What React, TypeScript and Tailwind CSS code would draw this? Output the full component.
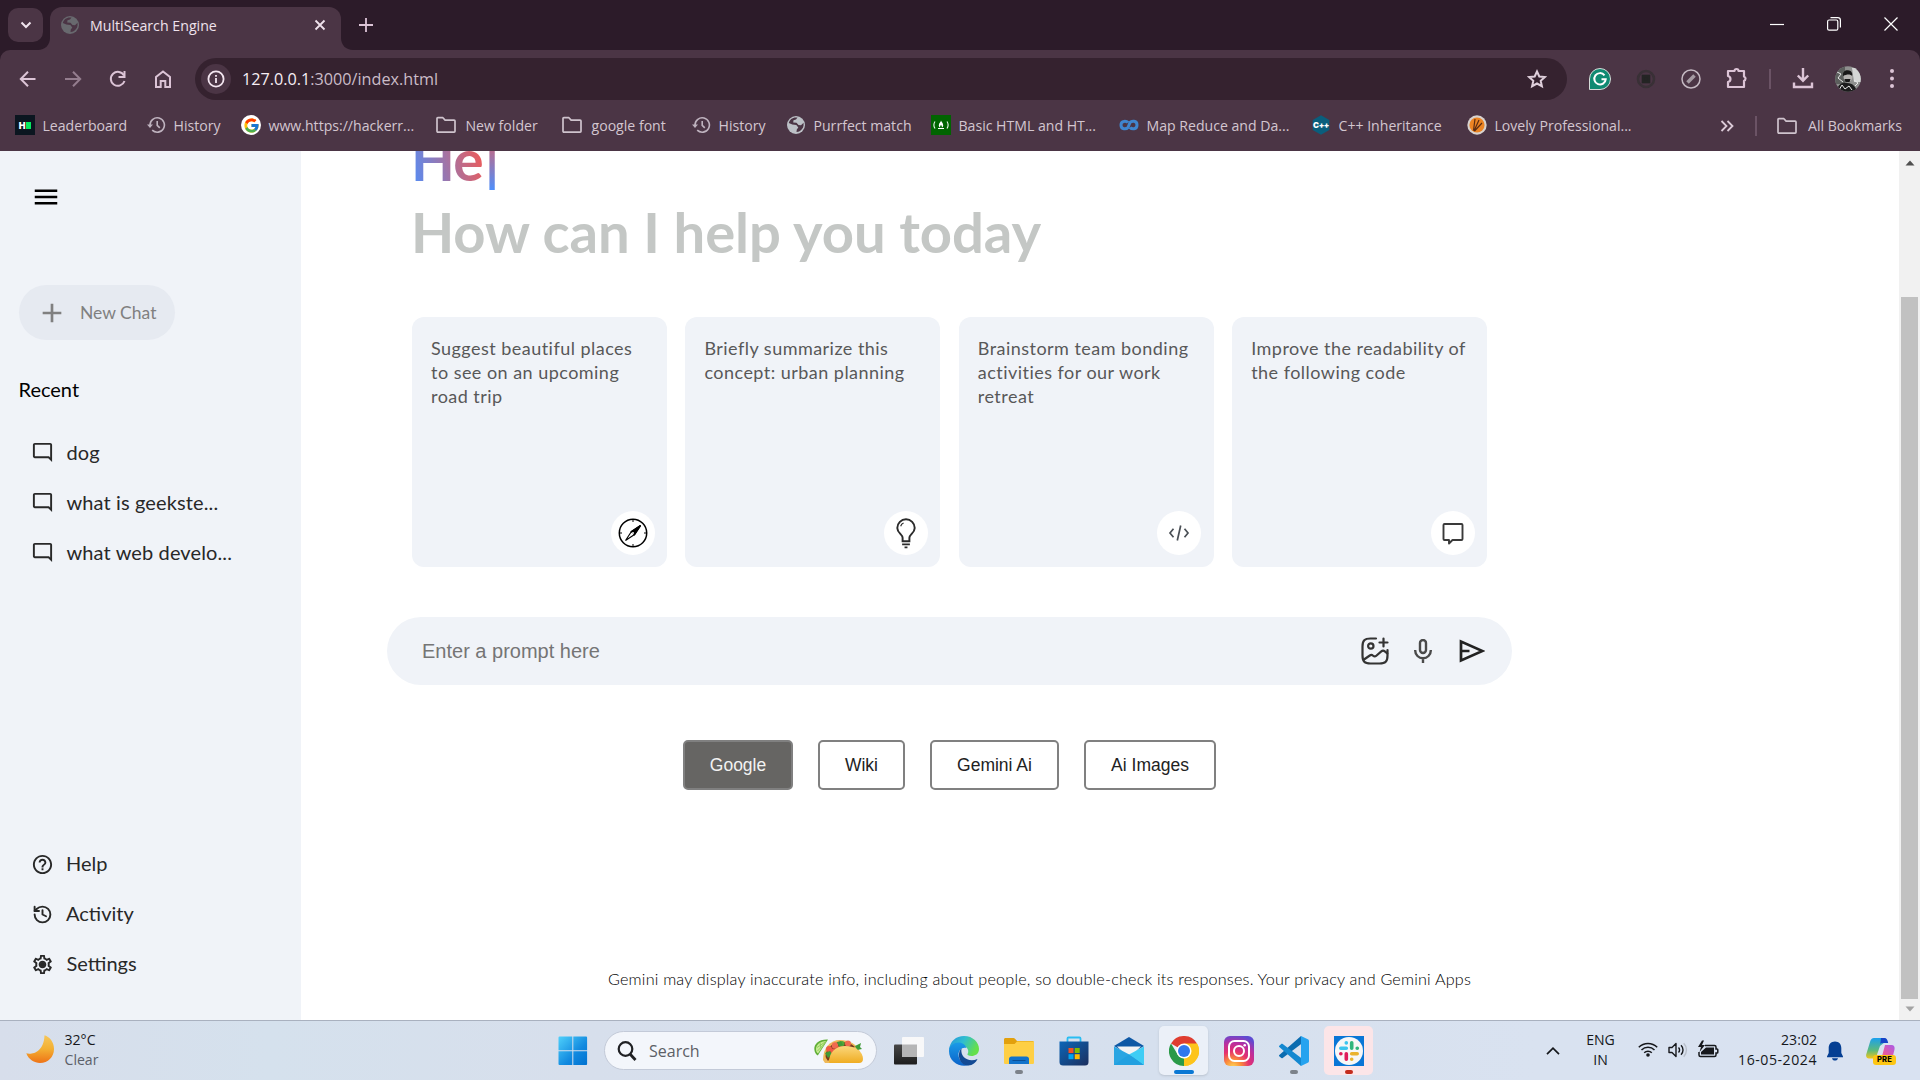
import React from 'react';
import { FcGoogle } from 'react-icons/fc';
import { History as HistoryIcon } from 'lucide-react';
import {
  MdMenu,
  MdAdd,
  MdOutlineModeComment,
  MdHelpOutline,
  MdOutlineSettings,
} from 'react-icons/md';

type IconProps = { className?: string };

/* ---------- browser icons ---------- */

const FolderIcon = ({ className = '' }: IconProps) => (
  <svg viewBox="0 0 20 20" className={`size-5 ${className}`} fill="none" stroke="#cfc3cd" strokeWidth="1.7" strokeLinejoin="round">
    <path d="M1 16.2V3.6c0-.5.4-.9.9-.9h5l2.2 2.4h9c.5 0 .9.4.9.9v10.2c0 .5-.4.9-.9.9H1.900c-.5 0-.9-.4-.9-1z" />
  </svg>
);

const GlobeIcon = ({ color }: { color: string }) => (
  <svg viewBox="0 0 20 20" className="size-5">
    <circle cx="10" cy="10" r="9" fill={color} />
    <path d="M11.500 2.600 10 4.500l-2.500.8-.3 2.200 3.300.3 2 2.200 2.500.3 2.500-2.500c.6 3.500-.6 6.200-3.500 8.200-1 .7-2.300 1-3.500 1l.3-2.500 1.500-2-2-2.500-4-.5L2.800 8C3.500 4.500 7 1.800 11.500 2.600z" fill="#4b3545" />
  </svg>
);

const ClockBack = () => (
  <svg viewBox="0 0 20 20" className="size-5" fill="none" stroke="#bfb3bf" strokeWidth="1.6">
    <path d="M4 10a7.200 7.200 0 1 1 2.200 5.200" />
    <path d="M11.200 6v4.300l2.600 2.600" />
    <path d="M1 9.500h6L4 13z" fill="#bfb3bf" stroke="none" />
  </svg>
);

const HackerRank = () => (
  <span className="flex size-5 items-center justify-center gap-px bg-[#0b1620] font-['Inter'] text-[9px] font-black leading-none text-white">
    H<span className="h-[7px] w-[5px] bg-[#05e95e]" />
  </span>
);

const CodeCamp = () => (
  <svg viewBox="0 0 20 20" className="size-5">
    <rect width="20" height="20" fill="#006400" />
    <path d="M4 6.500c-1.300 2-1.300 5 0 7M16 6.500c1.300 2 1.300 5 0 7" stroke="#e8f3e8" strokeWidth="1.100" fill="none" />
    <path d="M10 5.500c.3 1.500 2.200 2.500 2.200 4.800 0 1.100-.6 1.900-1.400 2.200.3-1.100-.1-1.700-.8-2.400-.7.700-1.100 1.300-.8 2.400-.8-.3-1.400-1.100-1.400-2.200C7.800 8 9.800 7.500 10 5.500zM7 13h6v1H7z" fill="#fff" />
  </svg>
);

const Infinity = () => (
  <svg viewBox="0 0 20 20" className="size-5" fill="none" stroke="#3f86cf" strokeWidth="3">
    <path d="M9 7.500C7.800 6.200 2 5 2 10s5.500 4.200 7 2.500L11 7.500C12.300 6 18 5 18 10s-5.500 4.200-7 2.500" />
  </svg>
);

const CppIcon = () => (
  <span className="relative flex size-5 items-center justify-center">
    <svg viewBox="0 0 20 20" className="absolute inset-0 size-5">
      <path d="M10 .3 18.300 5v10L10 19.700 1.700 15V5z" fill="#0a5e7c" />
    </svg>
    <span className="relative font-['Inter'] text-[8px] font-black leading-none tracking-tighter text-white">C++</span>
  </span>
);

const LpuIcon = () => (
  <svg viewBox="0 0 20 20" className="size-5">
    <circle cx="10" cy="10" r="9.700" fill="#d8d2ce" />
    <circle cx="10" cy="10" r="7.600" fill="#ec8423" />
    <path d="M6.500 15.500 8 4M7 16l5-11M7.500 16l7.500-8" stroke="#5b2c12" strokeWidth="1.200" />
  </svg>
);

const bookmarks: { label: string; icon: React.ReactNode; width: string }[] = [
  { label: 'Leaderboard', icon: <HackerRank />, width: 'w-[131px]' },
  { label: 'History', icon: <ClockBack />, width: 'w-[95px]' },
  { label: 'www.https://hackerr...', icon: <span className="flex size-5 items-center justify-center rounded-full bg-white"><FcGoogle className="size-[17px]" /></span>, width: 'w-[197px]' },
  { label: 'New folder', icon: <FolderIcon className="ml-[-2px] mr-[2px]" />, width: 'w-[126px]' },
  { label: 'google font', icon: <FolderIcon className="ml-[-2px] mr-[2px]" />, width: 'w-[127px]' },
  { label: 'History', icon: <ClockBack />, width: 'w-[95px]' },
  { label: 'Purrfect match', icon: <GlobeIcon color="#bcc0c6" />, width: 'w-[145px]' },
  { label: 'Basic HTML and HT...', icon: <CodeCamp />, width: 'w-[188px]' },
  { label: 'Map Reduce and Da...', icon: <Infinity />, width: 'w-[192px]' },
  { label: 'C++ Inheritance', icon: <CppIcon />, width: 'w-[156px]' },
  { label: 'Lovely Professional...', icon: <LpuIcon />, width: 'w-[253px]' },
];

function TabStrip() {
  return (
    <div className="flex h-[50px] items-start bg-[#2c1b29]">
      <button className="ml-2 mt-2 flex h-[34px] w-[35px] items-center justify-center rounded-[10px] bg-[#4b3545]">
        <svg viewBox="0 0 12 12" className="size-3" fill="none" stroke="#f0e4ee" strokeWidth="2">
          <path d="M1.500 3.500 6 8l4.500-4.500" />
        </svg>
      </button>
      <svg viewBox="0 0 12 12" className="ml-[-5px] mt-[38px] size-3" fill="#4b3545">
        <path d="M12 0v12H0C7 12 12 7 12 0z" />
      </svg>
      <div className="mt-[7px] flex h-[43px] w-[291px] items-center rounded-t-[12px] bg-[#4b3545] pb-[7px] pl-[10px]">
        <GlobeIcon color="#68696e" />
        <span className="ml-[10px] mt-px w-[224px] text-[14.200px] text-[#efe2ec]">MultiSearch Engine</span>
        <svg viewBox="0 0 12 12" className="size-3" fill="none" stroke="#efe2ec" strokeWidth="1.800">
          <path d="m1.500 1.500 9 9m0-9-9 9" />
        </svg>
      </div>
      <svg viewBox="0 0 12 12" className="mt-[38px] size-3" fill="#4b3545">
        <path d="M0 0v12h12C5 12 0 7 0 0z" />
      </svg>
      <svg viewBox="0 0 14 14" className="ml-1.5 mt-[18px] size-3.5" fill="none" stroke="#dcc4d6" strokeWidth="1.800">
        <path d="M7 0v14M0 7h14" />
      </svg>
      <div className="ml-auto mr-[22px] mt-[17px] flex items-center gap-[43px] text-white">
        <svg viewBox="0 0 14 14" className="size-3.5" stroke="currentColor" strokeWidth="1.200"><path d="M0 7.500h14" /></svg>
        <svg viewBox="0 0 14 14" className="size-3.5" fill="none" stroke="currentColor" strokeWidth="1.200">
          <rect x=".6" y="3" width="10.200" height="10.200" rx="1.500" />
          <path d="M3.500.7h7.300c1.500 0 2.600 1.100 2.600 2.600v7.300" />
        </svg>
        <svg viewBox="0 0 14 14" className="size-3.5" stroke="currentColor" strokeWidth="1.200"><path d="m.5.5 13 13m0-13-13 13" /></svg>
      </div>
    </div>
  );
}

function Toolbar() {
  return (
    <div className="bg-[#2c1b29]">
      <div className="flex h-[58px] items-center rounded-t-[10px] bg-[#4b3545] text-[#dcc4d6]">
        <div className="ml-[19px] flex w-[176px] items-center gap-[27px]">
          <svg viewBox="0 0 18 18" className="size-[18px]" fill="none" stroke="currentColor" strokeWidth="2"><path d="M16.500 9H2m7-7.200L1.800 9 9 16.200" /></svg>
          <svg viewBox="0 0 18 18" className="size-[18px] opacity-50" fill="none" stroke="currentColor" strokeWidth="2"><path d="M1 9h15M9 1.800 16.200 9 9 16.200" /></svg>
          <svg viewBox="0 0 18 18" className="size-[18px]" fill="none" stroke="currentColor" strokeWidth="2">
            <path d="M15 5.500A7 7 0 1 0 15.500 11" />
            <path d="M15.500 1v6H9.500" />
          </svg>
          <svg viewBox="0 0 18 18" className="size-[18px]" fill="none" stroke="currentColor" strokeWidth="2"><path d="M2 17V7l7-5.500L16 7v10h-4.700v-6H6.700v6z" /></svg>
        </div>
        <div className="flex h-[42px] w-[1372px] items-center rounded-full bg-[#35222f] pl-[6px] pr-5">
          <span className="flex size-[30px] items-center justify-center rounded-full bg-[#4b3545]">
            <svg viewBox="0 0 18 18" className="size-[18px]" fill="none" stroke="#f3e6f0" strokeWidth="1.800">
              <circle cx="9" cy="9" r="7.600" />
              <path d="M9 8v5M9 5v1.800" />
            </svg>
          </span>
          <span className="ml-[11px] mt-px flex-1 text-[16.200px] text-[#cbbcc8]"><span className="text-[#f7eef5]">127.0.0.1</span>:3000/index.html</span>
          <svg viewBox="0 0 20 20" className="size-5" fill="none" stroke="#dfcfdb" strokeWidth="2">
            <path d="m10 2.500 2.300 5 5.500.6-4.100 3.700 1.200 5.400L10 14.500l-4.900 2.700 1.200-5.400-4.100-3.700 5.500-.6z" />
          </svg>
        </div>
        <svg viewBox="0 0 22 22" className="ml-[22px] size-[22px]">
          <path d="M11 .5A10.500 10.500 0 1 1 11 21.500H.5V11A10.500 10.500 0 0 1 11 .5z" fill="#0f8a72" stroke="#d5dcd9" />
          <path d="M15.500 7.300a5.700 5.700 0 1 0 1.200 4h-4.200" fill="none" stroke="#fff" strokeWidth="2" />
        </svg>
        <svg viewBox="0 0 20 20" className="ml-[25px] size-5" fill="none" stroke="#393036" strokeWidth="2.600">
          <circle cx="10" cy="10" r="8" /><rect x="7" y="7" width="6" height="6" fill="#242424" stroke="#242424" />
        </svg>
        <svg viewBox="0 0 20 20" className="ml-[25px] size-5" fill="none" stroke="#c4b9c2" strokeWidth="1.500">
          <circle cx="10" cy="10" r="9" /><path d="m6.500 13.500 7-7" stroke="#a59ba3" strokeWidth="3.500" />
        </svg>
        <svg viewBox="0 0 22 22" className="mb-[2px] ml-[25px] size-[22px]" fill="none" stroke="currentColor" strokeWidth="2.200" strokeLinejoin="round">
          <path d="M2 4h6.500a2 2 0 0 1 4 0H18v5.500a2.200 2.200 0 0 1 0 4.200V20H2v-5c3.300-.7 3.300-5.200 0-6z" />
        </svg>
        <span className="ml-[21px] h-[20px] w-[1.500px] bg-[#6b5365]" />
        <svg viewBox="0 0 22 22" className="mb-[3px] ml-[21px] size-[22px]" fill="none" stroke="currentColor" strokeWidth="2.400">
          <path d="M11 1v12.500M5.800 8.500 11 13.700l5.200-5.200M2 15.500V20h18v-4.500" />
        </svg>
        <svg viewBox="0 0 26 26" className="ml-[21px] size-[26px]">
          <defs><clipPath id="avatar"><circle cx="13" cy="13" r="12.800" /></clipPath></defs>
          <g clipPath="url(#avatar)">
            <rect width="26" height="26" fill="#8f908f" />
            <path d="M0 0h10v18H0z" fill="#5c5f5d" />
            <path d="M17 2h9v14h-7z" fill="#d5d7d6" />
            <path d="M2 26c0-7 5-10 10-9 6 0 9 4 10 9z" fill="#1b1b1c" />
            <circle cx="13" cy="11" r="4.500" fill="#b4b2b0" />
            <path d="M8 10c-.5-4 2-6 5-5.700 3 .2 5 2.700 4 5.700-1.500-2-5-2-9 0zM9.500 13h6l-1 3h-4z" fill="#181818" />
            <path d="M2 6l4 2-3 4 5 4M4 24l3-5 3 4 4-3 3 4M19 14l4 3-3 3" stroke="#e8e8e8" fill="none" />
          </g>
        </svg>
        <svg viewBox="0 0 6 20" className="ml-7 h-5 w-1.5" fill="currentColor"><circle cx="3" cy="2" r="2" /><circle cx="3" cy="9.500" r="2" /><circle cx="3" cy="17" r="2" /></svg>
      </div>
    </div>
  );
}

function BookmarkBar() {
  return (
    <div className="flex h-[43px] items-center bg-[#4b3545] pb-[8px] pl-[15px] text-[14.100px] whitespace-nowrap text-[#d3c6d0]">
      {bookmarks.map((b, i) => (
        <div key={i} className={`flex shrink-0 items-center gap-[7.500px] ${b.width}`}>
          <span className="shrink-0">{b.icon}</span>
          {b.label}
        </div>
      ))}
      <svg viewBox="0 0 14 12" className="h-3 w-3.5" fill="none" stroke="#dccbd8" strokeWidth="1.800"><path d="m1.500 1 5 5-5 5M7.500 1l5 5-5 5" /></svg>
      <span className="ml-[21px] h-5 w-[2px] bg-[#6b5365]" />
      <FolderIcon className="ml-5" />
      <span className="ml-[11px]">All Bookmarks</span>
    </div>
  );
}

/* ---------- web page ---------- */

const SettingsIcon = ({ className = '' }: IconProps) => (
  <span className={`relative flex items-center justify-center ${className}`}>
    <MdOutlineSettings className="size-full" />
    <span className="absolute size-[5px] rounded-full bg-current" />
  </span>
);

function Sidebar() {
  return (
    <aside className="flex w-[301px] flex-col bg-[#f0f3f8] text-[20px] text-[#282828]">
      <MdMenu className="ml-[31px] mt-[31px] size-[30px] text-black" />
      <div className="ml-[19px] mt-[73px] flex h-[55px] w-[156px] items-center rounded-full bg-[#e6eaf1] pl-[17px] text-[17.500px] text-[#808080]">
        <MdAdd className="size-8" />
        <span className="ml-[12px] mt-[2px]">New Chat</span>
      </div>
      <p className="ml-[18.500px] mt-[34px] leading-[30px] text-black">Recent</p>
      <div className="mt-[24px] flex flex-col">
        {['dog', 'what is geekste...', 'what web develo...'].map((t) => (
          <div key={t} className="flex h-[50px] items-center pl-[31px]">
            <MdOutlineModeComment className="mt-[-1px] size-[23px]" />
            <span className="ml-[12.500px] mt-[-2px] tracking-[0.006em]">{t}</span>
          </div>
        ))}
      </div>
      <div className="mt-auto mb-[31px] flex flex-col">
        <div className="flex h-[50px] items-center pl-[31px]">
          <MdHelpOutline className="size-[23px]" />
          <span className="ml-[12px] mt-[-2px]">Help</span>
        </div>
        <div className="flex h-[50px] items-center pl-[32px]">
          <HistoryIcon className="size-[21px]" strokeWidth={2.200} />
          <span className="ml-[13px] mt-[-2px]">Activity</span>
        </div>
        <div className="flex h-[50px] items-center pl-[31px]">
          <SettingsIcon className="size-[23px]" />
          <span className="ml-[12.500px] mt-[-2px]">Settings</span>
        </div>
      </div>
    </aside>
  );
}

const CompassIcon = () => (
  <svg viewBox="0 0 30 30" className="size-[30px]" fill="none" stroke="#000" strokeWidth="1.500">
    <circle cx="15" cy="15" r="13.700" />
    <path d="M15 2v2M15 26v2M2 15h2M26 15h2" strokeWidth="1" />
    <path d="M22.500 7.500 13.500 13.500l-6 9L16.500 16.500z" strokeWidth="1.100" />
    <path d="M22.500 7.500 13.500 13.500l3 3z" fill="#000" />
    <circle cx="15" cy="15" r="1" fill="#fff" stroke="none" />
  </svg>
);

const BulbIcon = () => (
  <svg viewBox="0 0 22 32" className="h-[31px] w-[22px]" fill="none" stroke="#2b2b2b" strokeWidth="2">
    <path d="M7.500 24v-3.500C7.500 17 2 15.500 2 10.300a9 9 0 0 1 18 0c0 5.200-5.500 6.700-5.500 10.200V24z" />
    <path d="M5.500 8.500c.5-1.500 1.500-2.700 3-3.300" strokeWidth="1.200" />
    <path d="M7 27.300h8M9.500 30.300h3" strokeWidth="1.800" />
  </svg>
);

const CodeIcon = () => (
  <svg viewBox="0 0 22 18" className="h-[18px] w-[22px]" fill="none" stroke="#4a4f55" strokeWidth="1.700">
    <path d="M5.500 4.800 2 9l3.500 4.200M16.500 4.800 20 9l-3.500 4.200M12.700 1.500 9.300 16.500" />
  </svg>
);

const MessageIcon = () => (
  <svg viewBox="0 0 22 24" className="mt-[1px] h-6 w-[22px]" fill="none" stroke="#3a3a3a" strokeWidth="1.900" strokeLinejoin="round">
    <path d="M2.500 2h17c.6 0 1 .4 1 1v14c0 .6-.4 1-1 1h-9L7 21.500V18H2.500c-.6 0-1-.4-1-1V3c0-.6.4-1 1-1z" />
  </svg>
);

const cards: { lines: string[]; icon: React.ReactNode }[] = [
  { lines: ['Suggest beautiful places', 'to see on an upcoming', 'road trip'], icon: <CompassIcon /> },
  { lines: ['Briefly summarize this', 'concept: urban planning'], icon: <BulbIcon /> },
  { lines: ['Brainstorm team bonding', 'activities for our work', 'retreat'], icon: <CodeIcon /> },
  { lines: ['Improve the readability of', 'the following code'], icon: <MessageIcon /> },
];

function PromptBar() {
  return (
    <div className="ml-[86px] mt-[50px] flex h-[67.500px] w-[1125px] items-center rounded-full bg-[#f0f3f8] pl-[35px] pr-7">
      <span className="flex-1 font-['Liberation_Sans',sans-serif] text-[20px] text-[#757575]">Enter a prompt here</span>
      <svg viewBox="0 0 28 28" className="size-7" fill="none" stroke="#333" strokeWidth="2.200" strokeLinecap="round">
        <path d="M15 1.500H9.500c-6 0-8 2-8 8v9c0 6 2 8 8 8h9c6 0 8-2 8-8V13" />
        <circle cx="9.800" cy="9" r="2.700" />
        <path d="M22.500 1.500v8M18.500 5.500h8" />
        <path d="m3 22.500 5.800-4c1-.7 2.400-.6 3.300.2.900.8 2.300.8 3.200 0l5-4.300c1-.9 2.500-.9 3.500 0l2.500 2" />
      </svg>
      <svg viewBox="0 0 18 24" className="ml-[25px] h-6 w-[18px]" fill="none" stroke="#4a4a4a" strokeWidth="2.400">
        <rect x="6" y="1" width="6" height="13" rx="3" />
        <path d="M1.200 11v.5a7.800 7.800 0 0 0 15.600 0V11M9 19v5" />
      </svg>
      <svg viewBox="0 0 26 24" className="ml-[26.500px] mr-[-.5px] h-6 w-[26px]" fill="none" stroke="#222" strokeWidth="2.700">
        <path d="M2 2.500v19L23.500 12zM2 12h8.500" />
      </svg>
    </div>
  );
}

function MainPane() {
  return (
    <main className="flex flex-1 flex-col overflow-hidden bg-white">
      <div className="mt-[-28px] ml-[110px] text-[56.200px] font-bold leading-[73px]">
        <div className="flex h-[71px] text-transparent">
          <span className="bg-[linear-gradient(74deg,#4b90ff,#ff5546)] bg-clip-text text-[57px] tracking-[-0.015em]">He</span>
          <span className="ml-0.5 bg-[linear-gradient(4deg,#4b90ff_4%,#ff5546)] bg-clip-text">|</span>
        </div>
        <div className="mt-px tracking-[-0.001em] text-[#c4c7c5]">How can I help you today</div>
      </div>
      <div className="ml-[111px] mt-[49px] flex gap-[18.400px]">
        {cards.map((c) => (
          <div key={c.lines[0]} className="flex h-[250px] w-[255px] flex-col rounded-[12px] bg-[#f0f3f8] pt-[19px] pr-[12.500px] pb-3 pl-[19px]">
            <p className="text-[18px] leading-6 tracking-[0.026em] whitespace-nowrap text-[#585858]">
              {c.lines.map((l) => (
                <span key={l} className="block">{l}</span>
              ))}
            </p>
            <span className="mt-auto flex size-11 items-center justify-center self-end rounded-full bg-white">{c.icon}</span>
          </div>
        ))}
      </div>
      <PromptBar />
      <div className="ml-[382px] mt-[55.500px] flex gap-[25px] font-['Liberation_Sans',sans-serif] text-[17.500px] text-[#222]">
        <button className="h-[50px] w-[110px] rounded-[5px] border-2 border-[#808080] bg-[#666563] text-[#f2f2f2]">Google</button>
        <button className="h-[50px] w-[87px] rounded-[5px] border-2 border-[#808080]">Wiki</button>
        <button className="h-[50px] w-[129px] rounded-[5px] border-2 border-[#808080]">Gemini Ai</button>
        <button className="h-[50px] w-[132px] rounded-[5px] border-2 border-[#808080]">Ai Images</button>
      </div>
      <p className="mt-auto mb-[29px] ml-[307px] text-[16.200px] font-light leading-6 tracking-[0.012em] whitespace-nowrap text-black">
        Gemini may display inaccurate info, including about people, so double-check its responses. Your privacy and Gemini Apps
      </p>
    </main>
  );
}

function Scrollbar() {
  return (
    <div className="flex w-[21px] flex-col items-center bg-[#f1f1f1]">
      <svg viewBox="0 0 10 6" className="mt-[9px] h-1.5 w-2.5" fill="#505050"><path d="m5 .5 4.500 5h-9z" /></svg>
      <div className="mt-[131px] h-[702px] w-[17px] bg-[#c1c1c1]" />
      <svg viewBox="0 0 10 6" className="mt-[7px] h-1.5 w-2.5" fill="#a3a3a3"><path d="m5 5.500 4.500-5h-9z" /></svg>
    </div>
  );
}

/* ---------- taskbar ---------- */

const WindowsLogo = () => (
  <svg viewBox="0 0 30 30" className="size-[30px]">
    <defs><linearGradient id="win" x1="0" y1="0" x2="1" y2="1"><stop offset="0" stopColor="#4fd0fb" /><stop offset=".6" stopColor="#1189df" /><stop offset="1" stopColor="#0071d0" /></linearGradient></defs>
    <path d="M1.500.5h12.800v13.800H.5V1.500a1 1 0 0 1 1-1zM15.300.5h12.800a1 1 0 0 1 1 1v12.800H15.300zM.5 15.300h13.800v13.800H1.500a1 1 0 0 1-1-1zM15.300 15.300h13.800v12.800a1 1 0 0 1-1 1H15.300z" fill="url(#win)" />
  </svg>
);

const Taco = () => (
  <svg viewBox="0 0 50 26" className="h-[26px] w-[50px]">
    <defs><linearGradient id="shell" x1="0" y1="0" x2="0" y2="1"><stop offset="0" stopColor="#fbd77c" /><stop offset="1" stopColor="#efac22" /></linearGradient></defs>
    <path d="M14 1.500C5 1 0 6 .3 11c.2 3 1.500 5.500 3.500 6.500z" fill="#5fae35" />
    <path d="M12.500 3C6 3 2 7 2 11c0 2 .7 3.500 2 4.500z" fill="#c6eb92" />
    <path d="m3 9.500 9-6M3.500 13l9-9.500M6 4.500l1 6" stroke="#86c653" strokeWidth=".8" />
    <path d="M9 22C9 10 16 2 26 2c9 0 17 4 20 12L20 25h-9z" fill="#efb958" />
    <path d="M12 20c-2-7 6-16 14-16 6 0 11 1 15 5L20 16l-6 7z" fill="#7a3b1c" />
    <circle cx="15" cy="11" r="3" fill="#ee5a43" /><circle cx="21" cy="7.500" r="3.200" fill="#f06a4f" /><circle cx="19" cy="13" r="2.500" fill="#ee5a43" /><circle cx="28" cy="5.500" r="2.600" fill="#53a638" /><circle cx="34" cy="5.500" r="3" fill="#f06a4f" /><circle cx="25" cy="10.500" r="2.600" fill="#e8573d" />
    <path d="m11 15 5-2 2 3-4 4zM23 4l4-1 2 4-4 2zM41 8l6-3-1 4 2 2-5 1z" fill="#3f9a37" />
    <path d="M15 24c0-9 6-16 16-16 11 0 18 6 18 13 0 2.500-1.500 4-4 4H18c-2 0-3 0-3-1z" fill="url(#shell)" />
  </svg>
);

const TaskView = () => (
  <svg viewBox="0 0 30 30" className="size-[30px]">
    <defs><linearGradient id="tv" x1="0" y1="0" x2="0" y2="1"><stop offset="0" stopColor="#474747" /><stop offset="1" stopColor="#1d1d1d" /></linearGradient></defs>
    <rect x="0" y="8.500" width="23" height="20" rx="1" fill="url(#tv)" />
    <rect x="8" y="1" width="22" height="20" rx="1" fill="#f8f8f9" />
    <path d="M8 8.500h15V21H8z" fill="#b5b5b6" />
  </svg>
);

const EdgeLogo = () => (
  <svg viewBox="0 0 30 30" className="size-[30px]">
    <defs>
      <linearGradient id="e1" x1="0" y1="0" x2="1" y2=".4"><stop offset="0" stopColor="#2393dd" /><stop offset=".5" stopColor="#30bdd0" /><stop offset="1" stopColor="#65e04b" /></linearGradient>
      <linearGradient id="e2" x1="0" y1="0" x2="0" y2="1"><stop offset="0" stopColor="#1a9be8" /><stop offset="1" stopColor="#0a62c9" /></linearGradient>
    </defs>
    <path d="M0 14C1 5 7 0 15 0c9 0 15 6.500 15 13 0 5-4 7-7.500 7-3 0-4.500-1.200-4-2 1.500-2 1-6-3-8C10 8 3 9 0 14z" fill="url(#e1)" />
    <path d="M0 15c0-6 6-9 10.500-8.500 3.500.4 6.500 3 7 5.500-4-1.500-8 2-8 6.500 0 6 5 11 10.500 10.500C11 32 0 26 0 15z" fill="url(#e2)" />
    <path d="M12.500 12.500C8 16 9 29.500 19.500 29.500c4 0 7.500-3 9-6.500-9 4-17.500-2-16-10.500z" fill="#134a94" />
  </svg>
);

const ExplorerLogo = () => (
  <svg viewBox="0 0 30 30" className="size-[30px]">
    <path d="M0 3.500C0 2.700.6 2 1.500 2h8c.7 0 1 .2 1.500.7L13 5h15.500c.8 0 1.500.7 1.500 1.500V12H0z" fill="#e2a00d" />
    <path d="M0 8h10.500L13 5.500h17v21c0 1-.6 1.500-1.500 1.500h-27C.6 28 0 27.500 0 26.500z" fill="#fecf45" />
    <path d="M5 28v-5c0-1.500 1-2.500 2.500-2.500h15c1.500 0 2.500 1 2.500 2.500v5z" fill="#1273cb" />
    <path d="M8.500 24.500h13" stroke="#0a4f96" />
  </svg>
);

const StoreLogo = () => (
  <svg viewBox="0 0 30 30" className="size-[30px]">
    <defs><linearGradient id="st" x1="0" y1="0" x2="1" y2="1"><stop offset="0" stopColor="#0b66b8" /><stop offset="1" stopColor="#1c2f5e" /></linearGradient></defs>
    <path d="M8.500 6V2.500c0-.6.400-1 1-1h11c.6 0 1 .4 1 1V6" fill="none" stroke="#29bdf2" strokeWidth="1.800" />
    <path d="M.5 5.500h29V26a3.500 3.500 0 0 1-3.500 3.500H4A3.500 3.500 0 0 1 .5 26z" fill="url(#st)" />
    <path d="M9.500 12h5v5h-5z" fill="#f25022" /><path d="M15.700 12h5v5h-5z" fill="#7fba00" /><path d="M9.500 18.200h5v5h-5z" fill="#00a4ef" /><path d="M15.700 18.200h5v5h-5z" fill="#ffb900" />
  </svg>
);

const MailLogo = () => (
  <svg viewBox="0 0 30 30" className="size-[30px]">
    <path d="M0 10 15 1l15 9-15 9z" fill="#0d58a5" />
    <path d="M3 10.500h24L17 20h-4z" fill="#f1f3f5" />
    <path d="M0 10.500 20 21l10 8H0z" fill="#2aa5e2" />
    <path d="M30 10.500V29L15 18.500z" fill="#3fcdf5" />
    <path d="M0 29h30L15 18.500z" fill="#22a0e0" />
  </svg>
);

const ChromeLogo = () => (
  <svg viewBox="0 0 30 30" className="size-[30px]">
    <path d="M15 15 2 7.500A15 15 0 0 1 28 7.500z" fill="#df3d30" />
    <path d="M15 15 28 7.500A15 15 0 0 1 15 30l-1.500-1z" fill="#fdc41c" />
    <path d="M2 7.500 9 19l6 3.500L15 30A15 15 0 0 1 2 7.500z" fill="#2a9a48" />
    <path d="M15 7.500h13A15 15 0 0 1 15 30l6.500-11.200z" fill="#fdc41c" />
    <circle cx="15" cy="15" r="7.500" fill="#fff" />
    <circle cx="15" cy="15" r="6" fill="#3078ee" />
  </svg>
);

const InstagramLogo = () => (
  <svg viewBox="0 0 30 30" className="size-[30px]" fill="none">
    <defs><radialGradient id="ig" cx=".3" cy="1.050" r="1.100"><stop offset="0" stopColor="#fed859" /><stop offset=".25" stopColor="#fb8c3a" /><stop offset=".5" stopColor="#e4306f" /><stop offset=".75" stopColor="#b92fa0" /><stop offset="1" stopColor="#5e4bd2" /></radialGradient></defs>
    <rect width="30" height="30" rx="6" fill="url(#ig)" />
    <rect x="5" y="5" width="20" height="20" rx="5.500" stroke="#fff" strokeWidth="2" />
    <circle cx="15" cy="15" r="5" stroke="#fff" strokeWidth="2" />
    <circle cx="20.700" cy="9.200" r="1.300" fill="#fff" />
  </svg>
);

const VsCodeLogo = () => (
  <svg viewBox="0 0 30 30" className="size-[30px]">
    <path d="M22 0l1.500 7L3.700 21.900c-.5.4-1.200.4-1.700-.1L.3 20.300c-.5-.4-.4-.9 0-1.300z" fill="#0b6cb0" />
    <path d="M22 30l1.500-7L3.700 8.100c-.5-.4-1.200-.4-1.700.1L.3 9.700c-.5.4-.4.9 0 1.300z" fill="#1488d0" />
    <path d="M22 0l6.800 3.200c.7.3 1.200 1 1.200 1.800v20c0 .8-.5 1.500-1.200 1.800L22 30z" fill="#26a3ef" />
  </svg>
);

const SlackLogo = () => (
  <svg viewBox="0 0 30 30" className="size-[30px]">
    <rect width="30" height="30" fill="#0a76d6" />
    <circle cx="15" cy="15" r="14" fill="#f7f7f7" />
    <g strokeWidth="3.600" strokeLinecap="round">
      <path d="M12.300 6.800v.1M6.800 12.300h5.500" stroke="#3cc5ef" />
      <path d="M17.700 6.800v5.500M23.200 12.300h.1" stroke="#30b57c" />
      <path d="M17.700 17.700h5.500M17.700 23.200v.1" stroke="#eab22e" />
      <path d="M12.300 17.700v5.500M6.800 17.700h.1" stroke="#df1c5a" />
    </g>
  </svg>
);

type TaskApp = { name: string; icon: React.ReactNode; tile?: string; bar?: string };
const apps: TaskApp[] = [
  { name: 'view', icon: <TaskView /> },
  { name: 'edge', icon: <EdgeLogo /> },
  { name: 'files', icon: <ExplorerLogo />, bar: 'w-2 bg-[#7c828a]' },
  { name: 'store', icon: <StoreLogo /> },
  { name: 'mail', icon: <MailLogo /> },
  { name: 'chrome', icon: <ChromeLogo />, tile: 'bg-[#ebf0f8] shadow-sm', bar: 'w-5 bg-[#0a78d4]' },
  { name: 'instagram', icon: <InstagramLogo /> },
  { name: 'code', icon: <VsCodeLogo />, bar: 'w-2 bg-[#7c828a]' },
  { name: 'slack', icon: <SlackLogo />, tile: 'bg-[#fce5e8]', bar: 'w-2 bg-[#c42b1c]' },
];

function Taskbar() {
  return (
    <footer className="flex h-[60px] items-center border-t border-[#a9b1bf] bg-[linear-gradient(90deg,#d7deeb,#d5e1ed_14%,#d7dfec_30%,#d6e0ee_60%,#d9e2f0_80%,#d9e2f1)] text-[14.100px] text-[#16181c]">
      <svg viewBox="0 0 28 28" className="mb-[3px] ml-[26px] size-7">
        <defs><linearGradient id="moon" x1="0" y1="0" x2="0" y2="1"><stop offset="0" stopColor="#f6c75a" /><stop offset=".5" stopColor="#f3af32" /><stop offset="1" stopColor="#ee7317" /></linearGradient></defs>
        <path d="M18.500.3C24 2 28 7.500 28 14c0 8-6 14-14 14C8.500 28 2.500 24.500.3 18.300 5 20 18 18 18.500.3z" fill="url(#moon)" />
      </svg>
      <div className="mb-[2px] ml-[10.500px] w-[493px] leading-5">
        <div>32°C</div>
        <div className="text-[#5b6069]">Clear</div>
      </div>
      <WindowsLogo />
      <div className="ml-[16.500px] flex h-[39px] w-[273px] items-center rounded-full border border-[#c3cad8] bg-[#f3f6fb] pl-[12px] pr-3">
        <svg viewBox="0 0 20 20" className="size-5" fill="none" stroke="#202124" strokeWidth="2.200"><circle cx="8.500" cy="8" r="6.800" /><path d="m13 13 5.500 6" strokeWidth="2.800" /></svg>
        <span className="ml-3 flex-1 text-[16px] text-[#5c6066]">Search</span>
        <Taco />
      </div>
      <div className="ml-[4px] flex h-full">
        {apps.map((a) => (
          <div key={a.name} className="relative flex h-full w-[55px] items-center justify-center">
            <div className={`flex size-[49px] items-center justify-center rounded-[5px] ${a.tile ?? ''}`}>{a.icon}</div>
            {a.bar && <span className={`absolute bottom-[6px] h-1 rounded-full ${a.bar}`} />}
          </div>
        ))}
      </div>
      <svg viewBox="0 0 14 8" className="ml-[170px] h-2 w-3.5" fill="none" stroke="#16181c" strokeWidth="1.700"><path d="M1 7.200 7 1.200l6 6" /></svg>
      <div className="mb-[2px] ml-[20px] w-[41px] text-center leading-5">ENG<br />IN</div>
      <svg viewBox="0 0 20 16" className="mb-[3px] ml-[17px] h-4 w-5" fill="none" stroke="#16181c" strokeWidth="1.500">
        <path d="M.8 6.200a13 13 0 0 1 18.400 0M3.500 9a9.200 9.200 0 0 1 13 0M6.200 11.700a5.400 5.400 0 0 1 7.600 0" /><circle cx="10" cy="14" r="1.800" fill="#16181c" stroke="none" />
      </svg>
      <svg viewBox="0 0 20 16" className="mb-[2px] ml-[10px] h-4 w-5" fill="none" stroke="#16181c" strokeWidth="1.400">
        <path d="M1 5.500h3L8 1.500v13l-4-4H1z" strokeLinejoin="round" /><path d="M10.500 5.500a3.500 3.500 0 0 1 0 5M13 3.300a6.500 6.500 0 0 1 0 9.400" /><path d="M15.700 1.300a9.500 9.500 0 0 1 0 13.400" stroke="#b9bfca" />
      </svg>
      <svg viewBox="0 0 22 18" className="mb-1 ml-[9px] h-[18px] w-[22px]" fill="#16181c">
        <path d="M8 5.500h9.500c1 0 1.500.5 1.500 1.500v2h1c.6 0 .8.4.8.8v2.400c0 .4-.3.800-.8.800h-1v2c0 1-.5 1.500-1.500 1.500h-14c-1 0-1.500-.5-1.500-1.500V12" fill="none" stroke="#16181c" strokeWidth="1.500" />
        <path d="M9 7.500h8V14.500H4V12z" /><path d="M5 .5 1 7h3l-1.500 5L8 5H5l2-4.500z" />
      </svg>
      <div className="mb-[2px] ml-auto mr-[10px] text-right leading-5"><div>23:02</div><div className="tracking-[0.038em]">16-05-2024</div></div>
      <svg viewBox="0 0 16 20" className="h-5 w-4" fill="#053f93"><path d="M8 .5c4 0 6.300 2.800 6.300 6.500v5l1.700 3.500v.8H0v-.8L1.700 12V7C1.700 3.300 4 .5 8 .5zM5 17.200h6c-.3 1.500-1.500 2.300-3 2.300s-2.700-.8-3-2.300z" /></svg>
      <div className="relative ml-[23px] mr-[24px] size-[30px]">
        <svg viewBox="0 0 30 30" className="size-[30px]">
          <defs>
            <linearGradient id="c1" x1="0" y1="0" x2="0" y2="1"><stop offset="0" stopColor="#1aa0ef" /><stop offset=".6" stopColor="#5cba7c" /><stop offset="1" stopColor="#f2c61b" /></linearGradient>
            <linearGradient id="c2" x1="1" y1="0" x2="0" y2="1"><stop offset="0" stopColor="#a95be8" /><stop offset=".6" stopColor="#ea5a9c" /><stop offset="1" stopColor="#f7834c" /></linearGradient>
          </defs>
          <path d="M8 2h9c2 0 3 1 3.500 3L14 10l-3.500 10c-.6 2-2 2.500-3.500 2.500H3c-2 0-3.300-1.500-2.800-4L4 6c.7-2.500 2-4 4-4z" fill="url(#c1)" />
          <path d="M15 2h3.500c2 0 3 1.500 3.700 5h-6c-1 0-1.700.5-2 1.500z" fill="#1544c8" />
          <path d="M19 9h6.500c2.500 0 3.500 2 3 4.500l-2 8c-.6 2-2 3-4 3H12c2 0 3-1 3.700-3z" fill="url(#c2)" />
        </svg>
        <span className="absolute top-[19px] left-[7px] flex h-[10px] w-[23px] items-center justify-center rounded-[3px] bg-[#fdc614] font-['Inter'] text-[7.500px] font-extrabold tracking-wide text-black">PRE</span>
      </div>
    </footer>
  );
}

export default function App() {
  return (
    <div className="flex h-[1080px] w-[1920px] flex-col overflow-hidden font-['Open_Sans',sans-serif]">
      <TabStrip />
      <Toolbar />
      <BookmarkBar />
      <div className="flex h-[869px] shrink-0 font-['Lato',sans-serif]">
        <Sidebar />
        <MainPane />
        <Scrollbar />
      </div>
      <Taskbar />
    </div>
  );
}
